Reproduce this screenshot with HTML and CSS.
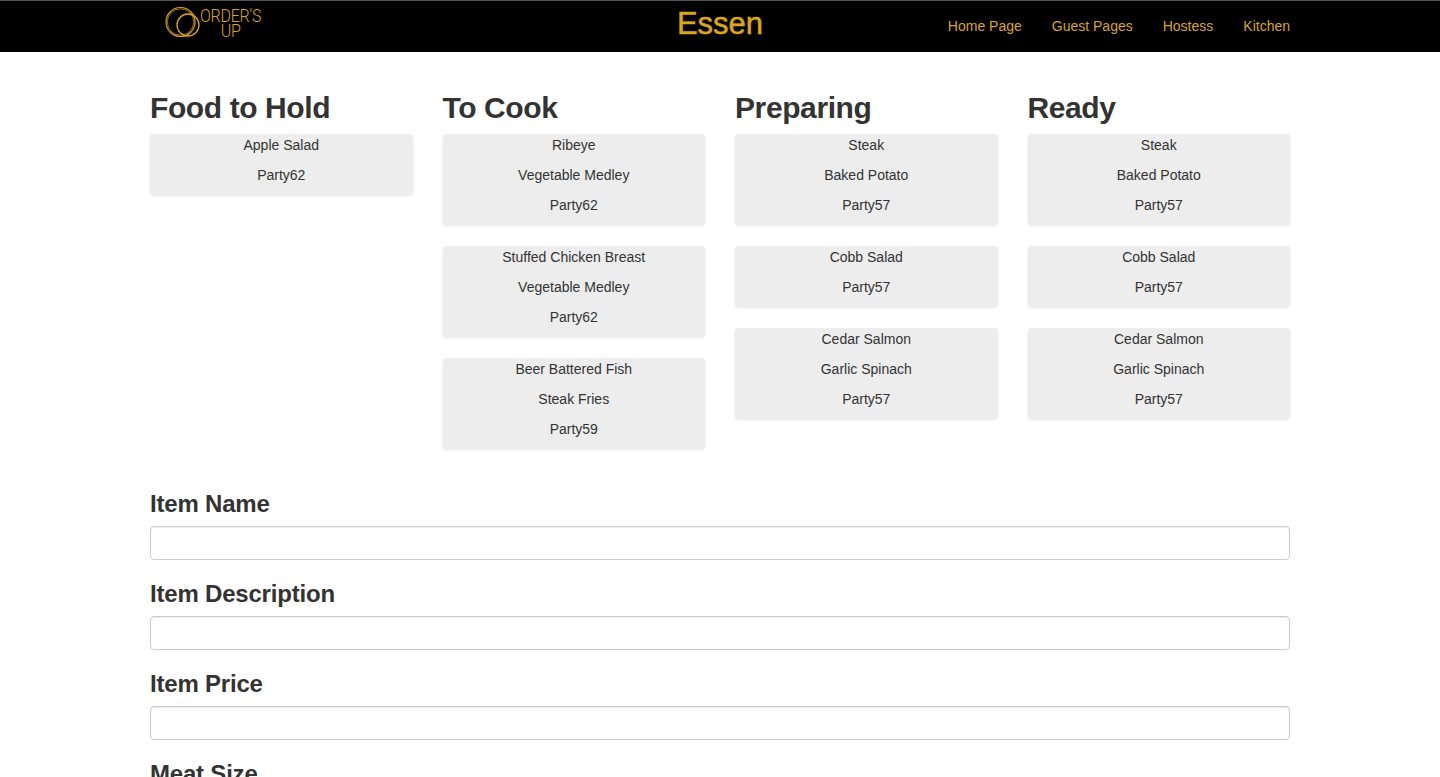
FILE: index.html
```html
<!DOCTYPE html>
<html lang="en">
<head>
<meta charset="utf-8">
<title>Essen</title>
<link rel="stylesheet" href="styles.css">
</head>
<body>
<nav class="navbar">
  <div class="nav-inner">
    <a class="brand" href="#">
      <svg class="brand-mark" width="35" height="32" viewBox="0 0 35 32" fill="none" stroke="#daa520">
        <circle cx="15.5" cy="16" r="14.5" stroke-width="1.1"/>
        <circle cx="15.5" cy="16" r="13.2" stroke-width="0.7"/>
        <circle cx="23" cy="19" r="11" stroke-width="1.3"/>
      </svg>
      <span class="brand-text"><span class="brand-line">ORDER'S</span><span class="brand-line">UP</span></span>
    </a>
    <div class="nav-title">Essen</div>
    <ul class="nav-links">
      <li><a href="#">Home Page</a></li>
      <li><a href="#">Guest Pages</a></li>
      <li><a href="#">Hostess</a></li>
      <li><a href="#">Kitchen</a></li>
    </ul>
  </div>
</nav>
<main class="container">
  <section class="board">
    <div class="column">
      <h2>Food to Hold</h2>
      <div class="ticket"><p>Apple Salad</p><p>Party62</p></div>
    </div>
    <div class="column">
      <h2>To Cook</h2>
      <div class="ticket"><p>Ribeye</p><p>Vegetable Medley</p><p>Party62</p></div>
      <div class="ticket"><p>Stuffed Chicken Breast</p><p>Vegetable Medley</p><p>Party62</p></div>
      <div class="ticket"><p>Beer Battered Fish</p><p>Steak Fries</p><p>Party59</p></div>
    </div>
    <div class="column">
      <h2>Preparing</h2>
      <div class="ticket"><p>Steak</p><p>Baked Potato</p><p>Party57</p></div>
      <div class="ticket"><p>Cobb Salad</p><p>Party57</p></div>
      <div class="ticket"><p>Cedar Salmon</p><p>Garlic Spinach</p><p>Party57</p></div>
    </div>
    <div class="column">
      <h2>Ready</h2>
      <div class="ticket"><p>Steak</p><p>Baked Potato</p><p>Party57</p></div>
      <div class="ticket"><p>Cobb Salad</p><p>Party57</p></div>
      <div class="ticket"><p>Cedar Salmon</p><p>Garlic Spinach</p><p>Party57</p></div>
    </div>
  </section>
  <form class="item-form">
    <div class="field"><label class="field-label" for="n">Item Name</label><input id="n" class="field-input" type="text"></div>
    <div class="field"><label class="field-label" for="d">Item Description</label><input id="d" class="field-input" type="text"></div>
    <div class="field"><label class="field-label" for="p">Item Price</label><input id="p" class="field-input" type="text"></div>
    <div class="field"><label class="field-label" for="m">Meat Size</label><input id="m" class="field-input" type="text"></div>
  </form>
</main>
</body>
</html>
```
FILE: styles.css
```css
* { box-sizing: border-box; }
html, body { margin: 0; padding: 0; height: 777px; overflow: hidden; }
body {
  font-family: "Liberation Sans", Arial, sans-serif;
  font-size: 14px;
  line-height: 20px;
  color: #333;
  background: #fff;
}
.navbar {
  height: 52px;
  background: #000;
  border-top: 1px solid #555;
}
.nav-inner {
  position: relative;
  width: 1140px;
  height: 51px;
  margin: 0 auto;
  display: flex;
  align-items: center;
  justify-content: space-between;
}
.brand {
  display: flex;
  align-items: flex-start;
  height: 51px;
  margin-left: 15px;
  padding-top: 5px;
  text-decoration: none;
  color: #daa520;
}
.brand-text {
  display: block;
  font-family: Roboto, "Liberation Sans", sans-serif;
  font-weight: 300;
  font-size: 16px;
  text-align: center;
  letter-spacing: -0.25px;
  margin-top: 2px;
}
.brand-line {
  display: block;
  height: 15px;
  line-height: 15px;
  transform: scaleY(1.15);
}
.nav-title {
  position: absolute;
  left: 0;
  right: 0;
  top: 5px;
  text-align: center;
  font-size: 31px;
  line-height: 36px;
  font-weight: 400;
  -webkit-text-stroke: 0.5px #daa520;
  color: #daa520;
  pointer-events: none;
}
.nav-links {
  display: flex;
  gap: 30px;
  list-style: none;
  margin: 0 0 2px;
  padding: 0;
}
.nav-links a {
  color: #daa520;
  text-decoration: none;
}
.container {
  width: 1140px;
  margin: 0 auto;
}
.board {
  display: grid;
  grid-template-columns: repeat(4, 262.5px);
  column-gap: 30px;
  padding-top: 38px;
}
.column h2 {
  margin: 0 0 9px;
  font-size: 30px;
  line-height: 35px;
  font-weight: 700;
  letter-spacing: -0.4px;
  color: #333;
}
.ticket {
  background: #ededed;
  border-radius: 4px;
  padding: 1px 0 10px;
  margin-bottom: 21px;
  text-align: center;
  box-shadow: 0 1px 3px rgba(0, 0, 0, 0.1);
}
.ticket p { margin: 0 0 10px; }
.ticket p:last-child { margin-bottom: 0; }
.item-form { padding-top: 20px; }
.field { margin-bottom: 20px; }
.field-label {
  display: block;
  font-size: 24px;
  line-height: 24px;
  padding-top: 2px;
  font-weight: 700;
  letter-spacing: -0.2px;
  margin-bottom: 10px;
}
.field-input {
  display: block;
  width: 100%;
  height: 34px;
  border: 1px solid #ccc;
  border-radius: 4px;
  background: #fff;
  box-shadow: inset 0 1px 1px rgba(0, 0, 0, 0.075);
}
```
